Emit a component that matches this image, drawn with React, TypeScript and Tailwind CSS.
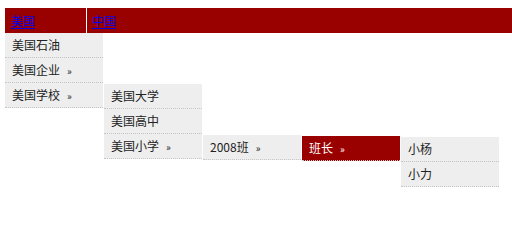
import React from 'react'

type Item = { label: string; more?: boolean; active?: boolean; children?: Item[] }

// the open path of the flyout menu, as seen in the screenshot
const usa: Item[] = [
  { label: '美国石油' },
  { label: '美国企业', more: true },
  {
    label: '美国学校',
    more: true,
    children: [
      { label: '美国大学' },
      { label: '美国高中' },
      {
        label: '美国小学',
        more: true,
        children: [
          {
            label: '2008班',
            more: true,
            children: [
              {
                label: '班长',
                more: true,
                active: true,
                children: [{ label: '小杨' }, { label: '小力' }],
              },
            ],
          },
        ],
      },
    ],
  },
]

function Menu({ items, sub }: { items: Item[]; sub?: boolean }) {
  return (
    <ul className={sub ? 'absolute top-px left-[99px] z-10 w-[98px]' : 'absolute top-[25px] left-0 z-10 w-[98px]'}>
      {items.map(item => (
        <li
          key={item.label}
          className={
            item.active
              ? 'relative h-[25px] border-b border-dotted border-[#c4c4c4] bg-[#990000] pl-[7px] leading-[24px] whitespace-nowrap text-white'
              : 'relative h-[25px] border-b border-dotted border-[#c4c4c4] bg-[#eeeeee] pl-[7px] leading-[24px] whitespace-nowrap text-[#222]'
          }
        >
          {item.label}
          {item.more && <span className="ml-[7px] text-[10px]">»</span>}
          {item.children && <Menu items={item.children} sub />}
        </li>
      ))}
    </ul>
  )
}

export default function App() {
  return (
    <div
      className="min-h-[226px] pt-[8px] pl-[5px] text-[12px]"
      style={{ fontFamily: '"Noto Sans CJK SC", "Liberation Sans", sans-serif' }}
    >
      <ul className="flex h-[25px] bg-[#990000]">
        <li className="relative w-[82px] border-r border-white pl-[6px] leading-[25px]">
          <a href="#" className="text-[#0000ee] underline underline-offset-[2px]">美国</a>
          <Menu items={usa} />
        </li>
        <li className="w-[82px] pl-[5px] leading-[25px]">
          <a href="#" className="text-[#0000ee] underline underline-offset-[2px]">中国</a>
        </li>
      </ul>
    </div>
  )
}
